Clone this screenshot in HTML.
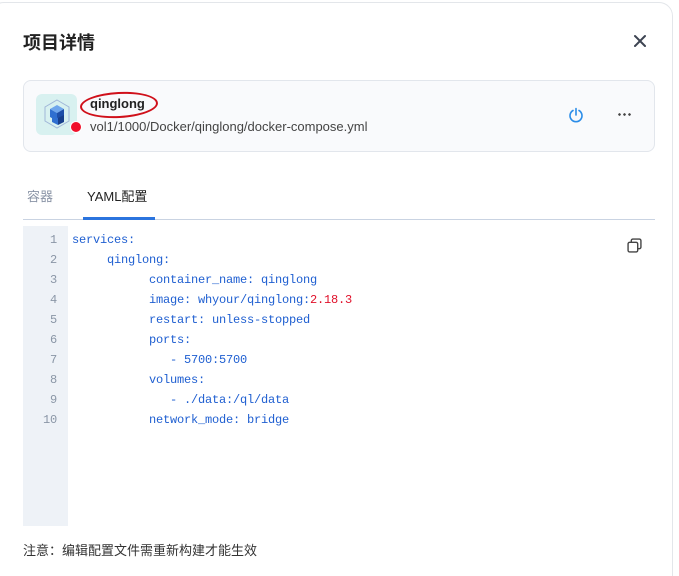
<!DOCTYPE html>
<html><head><meta charset="utf-8"><style>
*{margin:0;padding:0;box-sizing:border-box}
html,body{width:679px;height:576px;overflow:hidden}
body{background:#fff;font-family:"Liberation Sans","Noto Sans CJK SC",sans-serif;position:relative}
.dlg{position:absolute;left:-10px;top:2px;width:683px;height:600px;border:1px solid #e3e6ea;border-radius:14px;background:#fff}
.abs{position:absolute}
.title{left:23px;top:29px;font-size:18px;font-weight:bold;color:#222}
.card{left:23px;top:80px;width:632px;height:72px;border:1px solid #e2e6ec;border-radius:8px;background:#f9fafc}
.code{font-family:"Liberation Mono",monospace;font-size:12px;letter-spacing:-0.2px;color:#1f5fd1;line-height:20px;white-space:pre}
</style></head><body>
<div class="dlg"></div>
<div class="abs title">项目详情</div>
<svg class="abs" style="left:633px;top:34px" width="14" height="14" viewBox="0 0 14 14"><path d="M2 2L12 12M12 2L2 12" stroke="#3d4452" stroke-width="2" stroke-linecap="round"/></svg>
<div class="abs card"></div>
<div class="abs" style="left:36px;top:94px;width:41px;height:41px;border-radius:6px;background:#d8f1f0"></div>
<svg class="abs" style="left:40px;top:97px" width="34" height="34" viewBox="0 0 34 34"><polygon points="17,3 29,10 29,24 17,31 5,24 5,10" fill="none" stroke="#9fb6d8" stroke-width="1"/><polygon points="17,8 24,12 17,16 10,12" fill="#6fa6ec"/><polygon points="10,12 17,16 17,24 10,20" fill="#2f6fd0"/><polygon points="24,12 17,16 17,24 24,20" fill="#1d4ea8"/><polygon points="12,18 18,21 18,28 12,25" fill="#2f6fd0"/><polygon points="24,18 18,21 18,28 24,25" fill="#173f8c"/></svg>
<div class="abs" style="left:70px;top:121px;width:12px;height:12px;border-radius:50%;background:#f0102a;border:1px solid #fff"></div>
<div class="abs" style="left:80px;top:92px;width:78px;height:26px;border:2px solid #d0101a;border-radius:50%;transform:rotate(-3deg)"></div>
<div class="abs" style="left:90px;top:96px;font-size:13px;font-weight:bold;color:#222">qinglong</div>
<div class="abs" style="left:90px;top:119px;font-size:13px;color:#444">vol1/1000/Docker/qinglong/docker-compose.yml</div>
<svg class="abs" style="left:568px;top:107px" width="16" height="16" viewBox="0 0 16 16"><path d="M5 3.5A6 6 0 1 0 11 3.5" fill="none" stroke="#2b8de8" stroke-width="1.6" stroke-linecap="round"/><path d="M8 1.5V8" stroke="#2b8de8" stroke-width="1.6" stroke-linecap="round"/></svg>
<div class="abs" style="left:617px;top:113px;width:14px;height:3px;background:radial-gradient(circle,#444 1.2px,transparent 1.4px) 0 0/5px 3px repeat-x"></div>
<div class="abs" style="left:27px;top:186px;font-size:13px;color:#8a94a6">容器</div>
<div class="abs" style="left:87px;top:186px;font-size:13px;color:#222">YAML配置</div>
<div class="abs" style="left:23px;top:219px;width:632px;height:1px;background:#c9d3e2"></div>
<div class="abs" style="left:83px;top:217px;width:72px;height:3px;background:#2b74de"></div>
<div class="abs" style="left:23px;top:226px;width:45px;height:300px;background:#eef2f7"></div>
<div class="abs code" style="left:23px;top:230px;width:34px;text-align:right;color:#8a96a6">1
2
3
4
5
6
7
8
9
10</div>
<div class="abs code" style="left:72px;top:230px">services:
     qinglong:
           container_name: qinglong
           image: whyour/qinglong:<span style="color:#e0102a">2.18.3</span>
           restart: unless-stopped
           ports:
              - 5700:5700
           volumes:
              - ./data:/ql/data
           network_mode: bridge</div>
<svg class="abs" style="left:627px;top:238px" width="15" height="15" viewBox="0 0 14 14"><rect x="1" y="4" width="9" height="9" rx="1.5" fill="none" stroke="#444" stroke-width="1.3"/><path d="M4 4V2.5A1.5 1.5 0 0 1 5.5 1H11.5A1.5 1.5 0 0 1 13 2.5V8.5A1.5 1.5 0 0 1 11.5 10H10" fill="none" stroke="#444" stroke-width="1.3"/></svg>
<div class="abs" style="left:23px;top:540px;font-size:13px;color:#333">注意：编辑配置文件需重新构建才能生效</div>
</body></html>
